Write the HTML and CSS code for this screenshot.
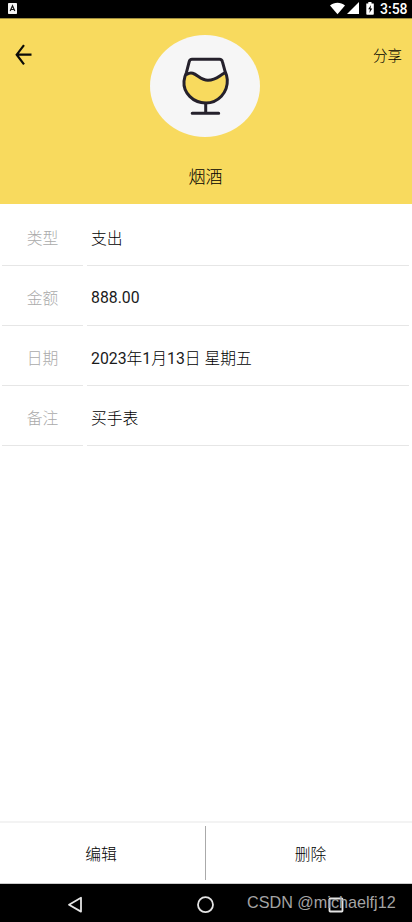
FILE: index.html
```html
<!DOCTYPE html>
<html lang="zh-CN">
<head>
<meta charset="utf-8">
<title>账单详情</title>
<link rel="stylesheet" href="styles.css">
</head>
<body>
<div class="status">
  <svg class="status-app" width="9" height="11" viewBox="0 0 9 11"><rect width="9" height="11" rx=".7" fill="#f4f4f4"/><path d="M2.2 8 4.5 2.8 6.8 8M3 6.5h3" fill="none" stroke="#111" stroke-width="1.2"/></svg>
  <svg class="status-icons" width="48" height="14" viewBox="0 0 48 14" fill="#fff"><path d="M0 3.4C4.4-.3 10.6-.3 15 3.4L7.5 12.2Z"/><path d="M29 0v12H17Z"/><path d="M36.3 1.5h2V0h3.2v1.5h2.3V12q0 .8-.8.8h-5.9q-.8 0-.8-.8Z"/><path d="M41 3 38.2 7.3h1.7l-.5 3.7 2.9-4.5h-1.8Z" fill="#000"/></svg>
  <span class="clock">3:58</span>
</div>
<header class="header">
  <svg class="back" width="18" height="22" viewBox="0 0 18 22"><path d="M9 1.2 1.7 10.7 9 20.3M1.7 10.7H16.5" fill="none" stroke="#0b0b08" stroke-width="2.2"/></svg>
  <div class="category">
    <div class="badge">
      <svg width="110" height="102" viewBox="0 0 110 102">
        <g transform="translate(0 -.3)">
        <path d="M36.5 39.5C44 33 49 46 58 45.5C66 45 69 41 74.5 37.5C77.5 44 78.5 52 74 58.5C70 64.5 63 68.3 56 68.3C48 68.3 40 64 36.5 57C34 51 34.5 45 36.5 39.5Z" fill="#f8da5e"/>
        <g fill="none" stroke="#25212c" stroke-width="3" stroke-linecap="round" stroke-linejoin="round"><path d="M42 24.5H69.5Q71.8 24.5 72.4 27L75 36.5Q77 41 77.3 45C78 58 68 68.3 55.7 68.3C43 68.3 33 58 34 46.5Q34.5 42 36.4 38L39.2 27Q39.8 24.5 42 24.5Z"/><path d="M37 39.5C44.5 34.5 49 45.7 58 45.5C66 45.3 68.5 41.5 74.3 38.5M55.7 68.5V78.5M42.2 78.5H68.7"/></g>
        </g>
      </svg>
    </div>
    <div class="category-name">烟酒</div>
  </div>
  <span class="share">分享</span>
</header>
<main class="details">
  <div class="label">类型</div><div class="value">支出</div>
  <div class="label">金额</div><div class="value amount">888.00</div>
  <div class="label">日期</div><div class="value"><b>2023</b>年<b>1</b>月<b>13</b>日 星期五</div>
  <div class="label">备注</div><div class="value">买手表</div>
</main>
<footer class="actions">
  <div class="action edit">编辑</div>
  <div class="divider"></div>
  <div class="action delete">删除</div>
</footer>
<nav class="nav">
  <svg width="412" height="38" viewBox="0 0 412 38" fill="none" stroke="#e4e4e4" stroke-width="1.8"><path d="M81 13.8V27.6L69 20.7Z" stroke-linejoin="round"/><circle cx="205.5" cy="20.7" r="7.5"/><rect x="329.5" y="14.5" width="13" height="13" rx=".7"/></svg>
  <span class="watermark">CSDN @michaelfj12</span>
</nav>
</body>
</html>
```
FILE: styles.css
```css
* { box-sizing: border-box; }
body {
  margin: 0;
  height: 922px;
  display: flex;
  flex-direction: column;
  overflow: hidden;
  background: #fff;
  color: #000;
  font-family: Roboto, "Noto Sans CJK SC", sans-serif;
  font-size: 15.8px;
}
.status {
  height: 18px;
  flex: none;
  display: flex;
  align-items: flex-start;
  background: #000;
  color: #fff;
}
.status-app { margin: 3px 0 0 8px; }
.status-icons { margin: 2px 0 0 auto; }
.clock {
  width: 28px;
  margin: 0 4px 0 2px;
  font-size: 14px;
  font-weight: 500;
  line-height: 18px;
  white-space: nowrap;
}
.header {
  height: 186px;
  flex: none;
  display: grid;
  grid-template-columns: 60px 1fr 62px;
  background: #f8da5e;
  border-top: 1px solid #a08e3e;
}
.back { margin: 25px 0 0 15px; }
.category {
  display: flex;
  flex-direction: column;
  align-items: center;
}
.badge {
  width: 110px;
  height: 102px;
  margin-top: 16px;
  border-radius: 50%;
  background: #f6f6f6;
}
.badge svg { display: block; }
.category-name {
  margin: 27px 0 0 1px;
  font-size: 17px;
  line-height: 26px;
  font-weight: 300;
}
.share {
  margin: 27px 10px 0 0;
  text-align: right;
  font-size: 14.5px;
  font-weight: 300;
  line-height: 22px;
}
.details {
  flex: 1;
  display: grid;
  grid-template-columns: 81px 322px;
  grid-auto-rows: 60px;
  column-gap: 4px;
  padding: 2px 3px 0 2px;
}
.label, .value {
  border-bottom: 1px solid #e6e6e6;
  padding-top: 5px;
  line-height: 56px;
  font-weight: 300;
}
.label { text-align: center; color: #aaa; }
.value { padding-left: 4px; }
.value b { font-weight: 400; color: #1a1a1a; }
.value.amount {
  padding-top: 4px;
  font-weight: 400;
  color: #1a1a1a;
}
.actions {
  height: 63px;
  flex: none;
  display: grid;
  grid-template-columns: 205px 1px 1fr;
  border-top: 2px solid #f3f3f3;
  border-bottom: 1px solid #ccc;
}
.action {
  text-align: center;
  line-height: 63px;
  font-weight: 300;
}
.edit { padding-right: 3px; }
.delete { padding-left: 3px; }
.divider { height: 54px; margin-top: 3px; background: #aaa; }
.nav {
  position: relative;
  height: 38px;
  flex: none;
  background: #000;
}
.nav svg { display: block; }
.watermark {
  position: absolute;
  left: 247px;
  top: 7px;
  color: #a4a4a4;
  font-family: "Liberation Sans", sans-serif;
  font-size: 16.2px;
  line-height: 22px;
  white-space: nowrap;
}
```
